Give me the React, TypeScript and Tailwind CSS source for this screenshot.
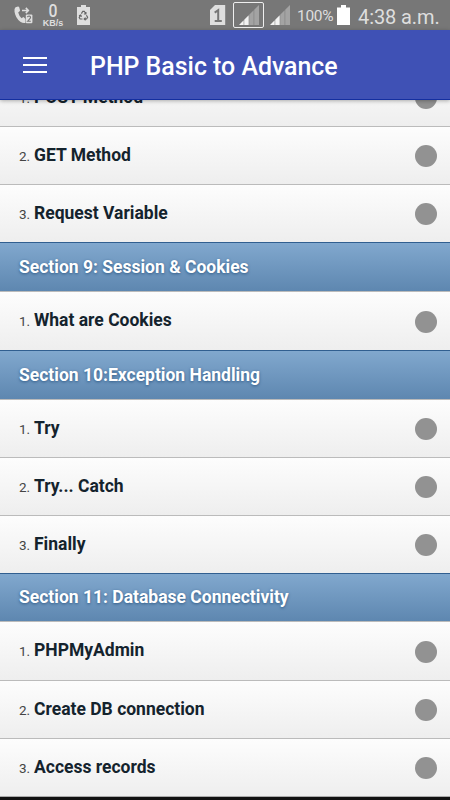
import clsx from "clsx";

type Entry = {
  kind: "section" | "topic";
  title: string;
  no?: number;
  height: string;
};

const entries: Entry[] = [
  { kind: "topic", no: 1, title: "POST Method", height: "h-[58px]" },
  { kind: "topic", no: 2, title: "GET Method", height: "h-[58px]" },
  { kind: "topic", no: 3, title: "Request Variable", height: "h-[58px]" },
  { kind: "section", title: "Section 9: Session & Cookies", height: "h-[49px]" },
  { kind: "topic", no: 1, title: "What are Cookies", height: "h-[59px]" },
  { kind: "section", title: "Section 10:Exception Handling", height: "h-[49px]" },
  { kind: "topic", no: 1, title: "Try", height: "h-[58px]" },
  { kind: "topic", no: 2, title: "Try... Catch", height: "h-[58px]" },
  { kind: "topic", no: 3, title: "Finally", height: "h-[58px]" },
  { kind: "section", title: "Section 11: Database Connectivity", height: "h-[48px]" },
  { kind: "topic", no: 1, title: "PHPMyAdmin", height: "h-[59px]" },
  { kind: "topic", no: 2, title: "Create DB connection", height: "h-[58px]" },
  { kind: "topic", no: 3, title: "Access records", height: "h-[58px]" },
];

const SignalIcon = () => (
  <svg className="h-[20px] w-[20px] shrink-0" viewBox="0 0 20 20">
    <path d="M0 20L4.7 15.3V20zM5.2 20V14.8L9.7 10.3V20z" fill="#f2f2f2" />
    <path d="M10.2 20V9.8L14.7 5.3V20zM15.2 20V4.8L20 0V20z" fill="#a3a3a3" />
  </svg>
);

const StatusBar = () => (
  <div className="flex h-[30px] shrink-0 items-center bg-[#777777] text-[#dedede]">
    <svg className="ml-[14px] h-[18px] w-[19px]" viewBox="0 0 19 18">
      <path
        d="M1.5 1.2L4 .6Q5 .6 5.3 1.5L6 4.3Q6 5 5.3 5.5L4.2 6.4Q5 9.7 7.6 12.2L9 11.2Q9.5 10.9 10.1 11.4L11.4 13V17Q8.8 17.5 6.3 15.7Q1.2 11.5.5 5.4Q.1 2.5 1.5 1.2z"
        fill="#dedede"
      />
      <path d="M8 4.5H14M11.8 1.9L14.4 4.5L11.8 7.1" stroke="#dedede" strokeWidth="1.5" fill="none" />
      <rect x="11.8" y="8.4" width="6.6" height="8.8" rx="1" fill="#dedede" />
      <path d="M13.4 11.2Q13.6 10 15.1 10Q16.6 10.1 16.6 11.4Q16.5 12.3 13.6 15.3H16.8" stroke="#777777" strokeWidth="1.1" fill="none" />
    </svg>
    <div className="ml-[8px] flex w-[24px] flex-col items-center pt-px">
      <span className="scale-x-90 text-[17.5px] leading-[15px] font-medium">0</span>
      <span className="font-['Liberation_Sans'] text-[9px] leading-[8px] font-bold">KB/s</span>
    </div>
    <svg className="ml-[12px] h-[20px] w-[13px]" viewBox="0 0 13 20">
      <path d="M4 0H9V2H13V20H0V2H4z" fill="#dedede" />
      <path
        d="M4.4 8.6L5.8 6.3H7.3L8.7 8.7M9.4 10.2L10.6 12.3L9.6 14H7.5M5.5 14H3.1L2.2 12.4L3.5 10.3M8.9 7V9H6.9M8.6 12.6L7.2 14L8.6 15.3M2 10.8L3.7 10L4.5 11.8"
        fill="none"
        stroke="#666666"
        strokeWidth="1.2"
      />
    </svg>
    <div className="flex-1" />
    <svg className="h-[20px] w-[16px]" viewBox="0 0 16 20">
      <path d="M5 0H15.2V20H0V5z" fill="#dedede" />
      <path d="M4.7 7.6L8.2 5.2V16M4.7 16H11.8" stroke="#777777" strokeWidth="2" fill="none" />
    </svg>
    <div className="ml-[7px] flex h-[26px] w-[31px] items-center justify-center rounded-[2px] border border-[#eeeeee]">
      <SignalIcon />
    </div>
    <div className="ml-[6px]">
      <SignalIcon />
    </div>
    <span className="ml-[7px] w-[36px] pt-[3px] text-[15.5px] leading-none tracking-[-0.3px]">100%</span>
    <svg className="ml-[4px] h-[20px] w-[13px]" viewBox="0 0 13 20">
      <path d="M4 0H9V2.5H13V20H0V2.5H4z" fill="#ffffff" />
    </svg>
    <span className="ml-[8px] w-[92px] pt-[3px] text-[20px] leading-none tracking-[-0.1px] whitespace-nowrap">4:38 a.m.</span>
  </div>
);

const AppBar = () => (
  <header className="relative z-10 flex h-[70px] shrink-0 items-center border-b border-[#142fa0] bg-[#3f51b5] shadow-[0_1px_4px_rgba(0,0,0,0.3)]">
    <div className="ml-[23px] flex w-[24px] flex-col gap-[4.5px] pt-px">
      <div className="h-[2.5px] bg-white" />
      <div className="h-[2.5px] bg-white" />
      <div className="h-[2.5px] bg-white" />
    </div>
    <h1 className="ml-[43px] pt-[5px] text-[24.9px] leading-none font-medium text-white">PHP Basic to Advance</h1>
  </header>
);

const SectionRow = ({ title, height }: Entry) => (
  <div
    className={clsx(
      "flex shrink-0 items-center border-t border-[#315f90] bg-linear-to-b from-[#81a8ce] to-[#5e87b0] pl-[19px]",
      height
    )}
  >
    <h2 className="pt-px text-[17.5px] leading-none font-bold text-white [text-shadow:0_1px_3px_#2f5a86]">{title}</h2>
  </div>
);

const TopicRow = ({ no, title, height }: Entry) => (
  <div
    className={clsx(
      "flex shrink-0 items-center border-t border-[#bbbbbb] bg-linear-to-b from-[#fdfdfd] to-[#eeeeee] pr-[13px] pl-[19px]",
      height
    )}
  >
    <div className="flex flex-1 items-baseline">
      <span className="w-[15px] text-[13.5px] leading-none text-[#444444]">{no}.</span>
      <span className="text-[17.5px] leading-none font-bold text-[#14232d]">{title}</span>
    </div>
    <span className="mt-px h-[22px] w-[22px] rounded-full bg-[#929292]" />
  </div>
);

export default function App() {
  return (
    <div className="flex h-[800px] w-[450px] flex-col overflow-hidden bg-[#111111] font-[Roboto,sans-serif]">
      <StatusBar />
      <AppBar />
      {/* list is scrolled, the first topic sits partly under the app bar */}
      <div className="-mt-[32px] flex flex-col border-b border-[#aaaaaa]">
        {entries.map((entry, i) =>
          entry.kind === "section" ? <SectionRow key={i} {...entry} /> : <TopicRow key={i} {...entry} />
        )}
      </div>
    </div>
  );
}
